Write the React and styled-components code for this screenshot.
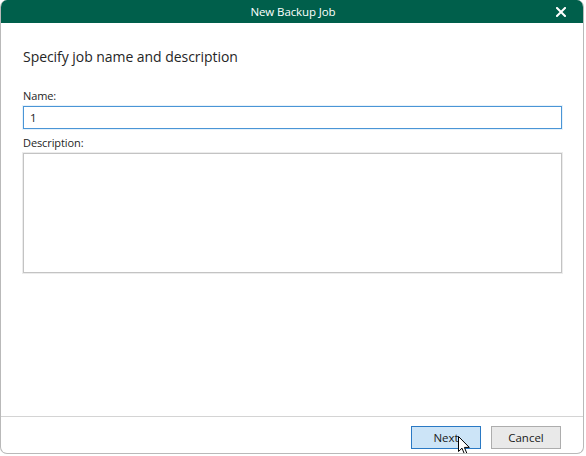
import React from "react";
import styled, { createGlobalStyle } from "styled-components";

const Global = createGlobalStyle`
  html, body { margin: 0; padding: 0; background: #ffffff; }
  body { font-family: "Open Sans", "Noto Sans", sans-serif; }
`;

const Window = styled.div`
  width: 584px;
  height: 454px;
  box-sizing: border-box;
  display: flex;
  flex-direction: column;
  background: #ffffff;
  border: 1px solid #b9b9b9;
  border-top: none;
  border-radius: 7px 7px 7px 7px;
  overflow: hidden;
`;

const TitleBar = styled.div`
  height: 23px;
  flex: none;
  background: #005f4b;
  color: #ffffff;
  display: grid;
  grid-template-columns: 1fr auto 1fr;
  align-items: center;
  margin: 0 -1px;
  font-family: "Open Sans", sans-serif;
  font-size: 11.5px;
`;

const Title = styled.div`
  grid-column: 2;
  padding-left: 2px;
  letter-spacing: -0.1px;
`;

const CloseButton = styled.div`
  grid-column: 3;
  justify-self: end;
  margin-right: 18px;
  display: flex;
  align-items: center;
`;

const Body = styled.div`
  flex: 1;
  display: flex;
  flex-direction: column;
  padding: 24px 22px 0 22px;
`;

const Heading = styled.h1`
  margin: 0;
  font-family: "Open Sans", sans-serif;
  font-weight: 400;
  font-size: 14px;
  line-height: 20px;
  color: #262626;
  letter-spacing: -0.05px;
`;

const Label = styled.label`
  display: block;
  font-family: "Open Sans", sans-serif;
  font-size: 11px;
  line-height: 15px;
  color: #1e1e1e;
  margin-top: ${(p) => p.$mt}px;
  margin-bottom: 3px;
  letter-spacing: -0.1px;
`;

const TextInput = styled.input`
  box-sizing: border-box;
  width: 539px;
  height: 23px;
  margin: 0;
  padding: 0 6px;
  border: 1px solid #4a95d6;
  box-shadow: 0 0 0 1px #e6f2fb;
  outline: none;
  font-family: "Open Sans", sans-serif;
  font-size: 11.5px;
  color: #1a1a1a;
  background: #ffffff;
`;

const TextArea = styled.textarea`
  box-sizing: border-box;
  width: 539px;
  height: 120px;
  margin: 0;
  padding: 4px 6px;
  border: 1px solid #c3c3c3;
  box-shadow: 0 0 0 1px #ececec;
  resize: none;
  outline: none;
  font-family: "Open Sans", sans-serif;
  font-size: 11.5px;
  background: #ffffff;
`;

const Footer = styled.div`
  flex: none;
  box-sizing: border-box;
  height: 37px;
  border-top: 1px solid #d4d4d4;
  display: flex;
  justify-content: flex-end;
  align-items: flex-start;
  gap: 10px;
  padding: 9px 22px 0 0;
`;

const Button = styled.button`
  position: relative;
  box-sizing: border-box;
  width: 70px;
  height: 23px;
  margin: 0;
  padding: 0;
  font-family: "Open Sans", sans-serif;
  font-size: 11.5px;
  color: #1a1a1a;
  background: ${(p) => (p.$primary ? "#cce4f7" : "#e9e9e9")};
  border: 1px solid ${(p) => (p.$primary ? "#2a79c4" : "#adadad")};
  border-radius: 0;
`;

const Cursor = styled.svg`
  position: absolute;
  left: 46px;
  top: 9px;
  pointer-events: none;
`;

export default function App() {
  return (
    <>
      <Global />
      <Window>
        <TitleBar>
          <Title>New Backup Job</Title>
          <CloseButton>
            <svg width="10" height="10" viewBox="0 0 10 10">
              <path d="M1 1 L9 9 M9 1 L1 9" stroke="#ffffff" strokeWidth="2" strokeLinecap="square" />
            </svg>
          </CloseButton>
        </TitleBar>
        <Body>
          <Heading>Specify job name and description</Heading>
          <Label $mt={21}>Name:</Label>
          <TextInput defaultValue="1" />
          <Label $mt={6}>Description:</Label>
          <TextArea />
        </Body>
        <Footer>
          <Button $primary>
            Next
            <Cursor width="13" height="20" viewBox="0 0 13 20">
              <path
                d="M0.5 0.5 L0.5 15.5 L4 12.2 L6.5 18.2 L8.8 17.2 L6.4 11.4 L11.3 11.4 Z"
                fill="#ffffff"
                stroke="#000000"
                strokeWidth="1"
                strokeLinejoin="round"
              />
            </Cursor>
          </Button>
          <Button>Cancel</Button>
        </Footer>
      </Window>
    </>
  );
}
